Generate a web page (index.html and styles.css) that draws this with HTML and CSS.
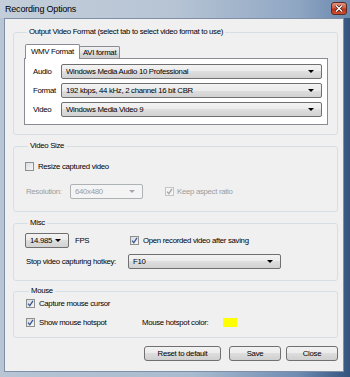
FILE: index.html
```html
<!DOCTYPE html>
<html lang="en">
<head>
  <meta charset="UTF-8" />
  <title>Recording Options</title>
  <link rel="stylesheet" href="styles.css">
</head>
<body>

  <div class="window">
    <div class="titlebar">
      <span class="title">Recording Options</span>
      <span class="close">
        <svg width="8" height="7" viewBox="0 0 8 7"><path d="M1 0.5 L7 6.5 M7 0.5 L1 6.5" stroke="#3a1510" stroke-width="2.6"/><path d="M1 0.5 L7 6.5 M7 0.5 L1 6.5" stroke="#fff" stroke-width="1.4"/></svg>
      </span>
    </div>

    <div class="client">
      <!-- Output format -->
      <fieldset class="group group-format">
        <legend>Output Video Format (select tab to select video format to use)</legend>
        <div class="tabs">
          <div class="tab active">WMV Format</div>
          <div class="tab">AVI format</div>
        </div>
        <div class="tabpanel">
          <div class="row">
            <span class="lbl-short">Audio</span>
            <div class="combo wide"><span>Windows Media Audio 10 Professional</span></div>
          </div>
          <div class="row">
            <span class="lbl-short">Format</span>
            <div class="combo wide"><span>192 kbps, 44 kHz, 2 channel 16 bit CBR</span></div>
          </div>
          <div class="row">
            <span class="lbl-short">Video</span>
            <div class="combo wide"><span>Windows Media Video 9</span></div>
          </div>
        </div>
      </fieldset>

      <!-- Video size -->
      <fieldset class="group group-size">
        <legend>Video Size</legend>
        <label class="check-row">
          <span class="check"></span>
          <span>Resize captured video</span>
        </label>
        <div class="row res-row">
          <span class="lbl-res disabled">Resolution:</span>
          <div class="combo res disabled"><span>640x480</span></div>
          <span class="check checked disabled keep"><svg width="7" height="7" viewBox="0 0 7 7"><path d="M1 3.6 L2.8 5.6 L6 0.8" fill="none" stroke="#a6a6a6" stroke-width="1.3"/></svg></span>
          <span class="disabled">Keep aspect ratio</span>
        </div>
      </fieldset>

      <!-- Misc -->
      <fieldset class="group group-misc">
        <legend>Misc</legend>
        <div class="row">
          <div class="combo fps"><span>14.985</span></div>
          <span class="lbl-fps">FPS</span>
          <span class="check checked"><svg width="7" height="7" viewBox="0 0 7 7"><path d="M1 3.6 L2.8 5.6 L6 0.8" fill="none" stroke="#3d5a93" stroke-width="1.3"/></svg></span>
          <span>Open recorded video after saving</span>
        </div>
        <div class="row hotkey-row">
          <span class="lbl-hotkey">Stop video capturing hotkey:</span>
          <div class="combo hotkey"><span>F10</span></div>
        </div>
      </fieldset>

      <!-- Mouse -->
      <fieldset class="group group-mouse">
        <legend>Mouse</legend>
        <label class="check-row mouse-row">
          <span class="check checked"><svg width="7" height="7" viewBox="0 0 7 7"><path d="M1 3.6 L2.8 5.6 L6 0.8" fill="none" stroke="#3d5a93" stroke-width="1.3"/></svg></span>
          <span>Capture mouse cursor</span>
        </label>
        <div class="row mouse-row second">
          <label class="check-row hotspot">
            <span class="check checked"><svg width="7" height="7" viewBox="0 0 7 7"><path d="M1 3.6 L2.8 5.6 L6 0.8" fill="none" stroke="#3d5a93" stroke-width="1.3"/></svg></span>
            <span>Show mouse hotspot</span>
          </label>
          <span class="lbl-color">Mouse hotspot color:</span>
          <span class="swatch"></span>
        </div>
      </fieldset>

      <div class="buttons">
        <button class="btn reset">Reset to default</button>
        <button class="btn save">Save</button>
        <button class="btn close-btn">Close</button>
      </div>
    </div>
  </div>

</body>
</html>
```

FILE: styles.css
```css
body {
  margin: 0;
  width: 350px;
  height: 377px;
  overflow: hidden;
  font-family: 'Liberation Sans', Arial, sans-serif;
  font-size: 7.8px;
  letter-spacing: -0.3px;
  color: #000;
}

.window {
  width: 350px;
  height: 377px;
  display: flex;
  flex-direction: column;
  padding: 0 6px 5px 4px;
  box-sizing: border-box;
  background: linear-gradient(to right, #b7c5d5 0%, #a9bbcf 55%, #6f8cb2 85%, #34547e 100%);
}

.titlebar {
  height: 18px;
  display: flex;
  align-items: center;
  margin: 0 -6px 0 -4px;
  padding: 0 3px 0 5px;
  background: linear-gradient(to right, #c4ceda 0%, #b6c4d4 50%, #8fa6c3 85%, #6b88ae 100%);
}

.title {
  font-size: 9px;
  letter-spacing: -0.2px;
  flex: 1;
  color: #000;
}

.close {
  width: 14px;
  height: 11px;
  margin-top: -1px;
  display: flex;
  align-items: center;
  justify-content: center;
  border: 1px solid #5c2a22;
  border-radius: 3px;
  background: linear-gradient(#e0937f 0%, #cf5c41 45%, #b8321a 55%, #cd4e2c 100%);
}

.client {
  flex: 1;
  background: #f0f0f0;
  border: 1px solid #7f90a6;
  padding: 8px 5px 9px 8px;
  display: flex;
  flex-direction: column;
}

.group {
  margin: 0;
  border: 1px solid #d5dfe5;
  border-radius: 3px;
  padding: 0 9px 0 10px;
  min-width: 0;
}

.group legend {
  padding: 0 2px;
  margin-left: 3px;
  line-height: 10px;
}

.group-format {
  padding-top: 7px;
  padding-bottom: 9px;
}

.group-size {
  margin-top: 6px;
  padding-left: 11px;
  padding-top: 9px;
  padding-bottom: 12px;
}

.group-misc {
  margin-top: 6px;
  padding-left: 11px;
  padding-top: 5px;
  padding-bottom: 11px;
}

.group-mouse {
  margin-top: 5px;
  padding-left: 12px;
  padding-top: 1px;
  padding-bottom: 9px;
}

/* tabs */
.tabs {
  display: flex;
  align-items: flex-end;
  padding-left: 1px;
  height: 14px;
}

.tab {
  height: 12px;
  line-height: 12px;
  padding: 0 3px;
  border: 1px solid #898c95;
  border-bottom: none;
  border-radius: 2px 2px 0 0;
  background: linear-gradient(#f2f2f2, #e3e3e3 50%, #d9d9d9 50%, #cfcfcf);
  box-sizing: border-box;
  margin-left: -1px;
  white-space: nowrap;
  text-align: center;
}

.tab.active {
  height: 15px;
  line-height: 14px;
  width: 55px;
  margin-left: 0;
  margin-bottom: -1px;
  background: #fff;
  position: relative;
  z-index: 1;
}

.tab:not(.active) {
  width: 41px;
}

.tabpanel {
  background: #fff;
  border: 1px solid #898c95;
  padding: 5px 5px 7px 8px;
  display: flex;
  flex-direction: column;
  gap: 4px;
}

.row {
  display: flex;
  align-items: center;
  white-space: nowrap;
}

.lbl-short {
  width: 28px;
}

/* combo boxes */
.combo {
  height: 15px;
  box-sizing: border-box;
  border: 1px solid #707070;
  border-radius: 2px;
  background: linear-gradient(#f3f3f3 0%, #ebebeb 50%, #dedede 50%, #d2d2d2 100%);
  display: flex;
  align-items: center;
  justify-content: space-between;
  padding: 0 7px 0 4px;
  white-space: nowrap;
  overflow: hidden;
}

.combo::after {
  content: "";
  border-left: 3px solid transparent;
  border-right: 3px solid transparent;
  border-top: 3px solid #000;
}

.combo.wide {
  flex: 1;
}

.combo.disabled {
  border-color: #adb2b5;
  background: #f4f4f4;
}

.combo.disabled::after {
  border-top-color: #a6a6a6;
}

.disabled {
  color: #9c9c9c;
}

/* checkboxes */
.check {
  width: 9px;
  height: 9px;
  box-sizing: border-box;
  border: 1px solid #8e8f8f;
  background: linear-gradient(135deg, #d9dce1, #f6f6f6);
  display: flex;
  align-items: center;
  justify-content: center;
  flex-shrink: 0;
}

.check.disabled {
  border-color: #c4c4c4;
  background: #f4f4f4;
}

.check-row {
  display: flex;
  align-items: center;
  gap: 4px;
  height: 12px;
  white-space: nowrap;
}

.res-row {
  margin-top: 12px;
}

.lbl-res {
  width: 44px;
  margin-left: 1px;
}

.combo.res {
  width: 73px;
}

.keep {
  margin-left: 22px;
  margin-right: 3px;
}

.combo.fps {
  width: 44px;
}

.lbl-fps {
  width: 55px;
  margin-left: 6px;
}

.group-misc .row .check {
  margin-right: 4px;
}

.hotkey-row {
  margin-top: 6px;
}

.lbl-hotkey {
  width: 102px;
  margin-left: 1px;
}

.combo.hotkey {
  width: 153px;
}

.mouse-row.second {
  margin-top: 7px;
  height: 12px;
}

.hotspot {
  width: 116px;
}

.lbl-color {
  width: 81px;
}

.swatch {
  width: 14px;
  height: 9px;
  background: #ffff00;
}

/* bottom buttons */
.buttons {
  display: flex;
  justify-content: flex-end;
  margin-top: 8px;
}

.btn {
  height: 15px;
  padding: 0;
  font-family: inherit;
  font-size: 7.8px;
  letter-spacing: -0.3px;
  border: 1px solid #707070;
  border-radius: 3px;
  background: linear-gradient(#f2f2f2 0%, #ebebeb 50%, #dddddd 50%, #cfcfcf 100%);
  color: #000;
}

.reset {
  width: 77px;
}

.save {
  width: 52px;
  margin-left: 8px;
}

.close-btn {
  width: 52px;
  margin-left: 5px;
}
```
